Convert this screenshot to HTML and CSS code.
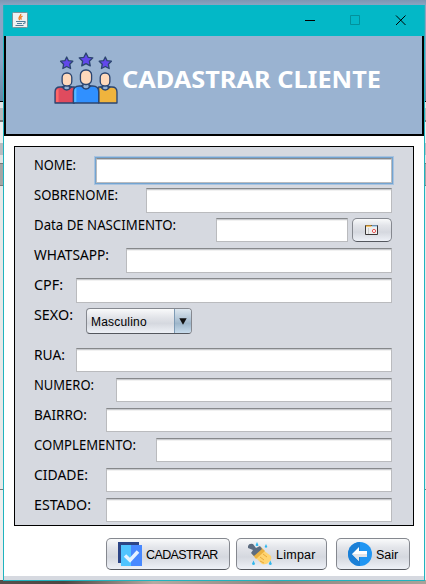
FILE: index.html
```html
<!DOCTYPE html>
<html lang="pt-BR">
<head>
<meta charset="utf-8">
<title>Cadastrar Cliente</title>
<link rel="stylesheet" href="styles.css">
</head>
<body>
<main class="window">
  <div class="titlebar">
    <svg class="java" width="16" height="16" viewBox="0 0 16 16"><rect x=".5" y=".5" width="15" height="15" rx="1" fill="#eef1f2" stroke="#7b9299"/><path d="M8.700 2c1 2-3.500 3-1 6M10.500 4c-2 1.200-2.500 2-1 3.500" fill="none" stroke="#ed7d22" stroke-width="1.300"/><path d="M4 9.500h7M5 11.500h5M3.500 13.500h8M11 9.500h2v1.500l-2 .8" fill="none" stroke="#4e7d99" stroke-width="1.100"/></svg>
    <svg class="controls" width="102" height="12" viewBox="0 0 102 12"><path d="M0 6.500h10" stroke="#000"/><path d="M45.500 1.500h9v9h-9z" fill="none" stroke="#02919b"/><path d="M91 1.500l9.500 9.500M100.500 1.500L91 11" stroke="#000" stroke-width="1"/></svg>
  </div>
  <header class="header">
    <svg class="people" width="64" height="54" viewBox="0 0 63 54" preserveAspectRatio="none" stroke="#2b4570" stroke-width="1.300" stroke-linejoin="round">
      <g fill="#6248ec">
        <path d="M12.500 5l1.800 3.700 4.200.5-3 3 .8 4.300-3.800-2-3.800 2 .8-4.300-3-3 4.200-.5z"/>
        <path d="M50.500 5l1.800 3.700 4.200.5-3 3 .8 4.300-3.800-2-3.800 2 .8-4.300-3-3 4.200-.5z"/>
        <path d="M31.500 1l2.100 4.300 4.600.6-3.400 3.300.9 4.700-4.200-2.300-4.200 2.300.9-4.700-3.400-3.300 4.600-.6z"/>
      </g>
      <path d="M1 51V40q0-5 5-5h14v16z" fill="#e04b5e"/><path d="M2 50V40q0-3 2.500-3v13z" fill="#ff6868" stroke="none"/>
      <path d="M44 51V35h13q5 0 5 5v11z" fill="#f0b43d"/>
      <path d="M10 32h5v3h2q-4.500 6-9 0h2zM48 32h5v3h2q-4.500 6-9 0h2z" fill="#93b2d6"/>
      <rect x="8" y="21" width="9.500" height="13" rx="4.500" fill="#ffd9bb"/><rect x="45.500" y="21" width="9.500" height="13" rx="4.500" fill="#ffd9bb"/>
      <path d="M19 51V40q0-6 6-6h13q6 0 6 6v11z" fill="#3090ff"/><path d="M20 50V40q0-4 2-4v14z" fill="#58bcff" stroke="none"/>
      <path d="M28.500 31h6v3h1.500q-4.500 6-9 0h1.500z" fill="#93b2d6"/><rect x="26" y="18" width="11" height="14.500" rx="5" fill="#ffd9bb"/>
    </svg>
    <svg class="title" width="270" height="40"><text x="0" y="25" textLength="259" lengthAdjust="spacingAndGlyphs">CADASTRAR CLIENTE</text></svg>
  </header>
  <section class="panel">
    <div class="row"><svg class="label"><text y="12" textLength="42" lengthAdjust="spacingAndGlyphs">NOME:</text></svg><i class="field w-nome focus"></i></div>
    <div class="row"><svg class="label"><text y="12" textLength="84" lengthAdjust="spacingAndGlyphs">SOBRENOME:</text></svg><i class="field tall w-sobrenome"></i></div>
    <div class="row"><svg class="label"><text y="12" textLength="142" lengthAdjust="spacingAndGlyphs">Data DE NASCIMENTO:</text></svg><i class="field w-data"></i>
      <button class="button date"><svg width="14" height="12" viewBox="0 0 14 12"><path d="M.5 1.500h12v9H.5z" fill="#eee" stroke="#3b3838"/><path d="M1 2h5.500" stroke="#f4aa28" stroke-width="1.300"/><path d="M7 2h5" stroke="#8fc3f0" stroke-width="1.300"/><path d="M3.500 4v6" stroke="#ccc"/><circle cx="9" cy="7" r="1.600" fill="#fff" stroke="#e65353"/></svg></button></div>
    <div class="row"><svg class="label"><text y="12" textLength="75" lengthAdjust="spacingAndGlyphs">WHATSAPP:</text></svg><i class="field tall w-whatsapp"></i></div>
    <div class="row"><svg class="label"><text y="12" textLength="29" lengthAdjust="spacingAndGlyphs">CPF:</text></svg><i class="field tall w-cpf"></i></div>
    <div class="row row-select"><svg class="label"><text y="12" textLength="39" lengthAdjust="spacingAndGlyphs">SEXO:</text></svg><div class="select"><span>Masculino</span><b><svg width="8" height="7"><path d="M.3.300h7.400L4 6.800z" fill="#111"/></svg></b></div></div>
    <div class="row"><svg class="label"><text y="12" textLength="31" lengthAdjust="spacingAndGlyphs">RUA:</text></svg><i class="field w-cpf"></i></div>
    <div class="row"><svg class="label"><text y="12" textLength="60" lengthAdjust="spacingAndGlyphs">NUMERO:</text></svg><i class="field w-numero"></i></div>
    <div class="row"><svg class="label"><text y="12" textLength="53" lengthAdjust="spacingAndGlyphs">BAIRRO:</text></svg><i class="field w-bairro"></i></div>
    <div class="row"><svg class="label"><text y="12" textLength="102" lengthAdjust="spacingAndGlyphs">COMPLEMENTO:</text></svg><i class="field w-complemento"></i></div>
    <div class="row"><svg class="label"><text y="12" textLength="54" lengthAdjust="spacingAndGlyphs">CIDADE:</text></svg><i class="field w-bairro"></i></div>
    <div class="row"><svg class="label"><text y="12" textLength="57" lengthAdjust="spacingAndGlyphs">ESTADO:</text></svg><i class="field w-bairro"></i></div>
  </section>
  <footer class="actions">
    <button class="button save"><svg width="24" height="24" viewBox="0 0 24 24"><path d="M0 0h21v21H0z" fill="#2c4586"/><path d="M3 3h11v21H3z" fill="#50c4ff"/><path d="M13 3h11v21H13z" fill="#4788ff"/><path d="M7 13.500l5 4.700 8-8.700" fill="none" stroke="#e6f3ff" stroke-width="3.500"/></svg><span>CADASTRAR</span></button>
    <button class="button clear"><svg width="24" height="24" viewBox="0 0 24 24"><path d="M6 14L15 8l8 6q1 4-2 6-2 3-7 2z" fill="#ffd470"/><path d="M4 12l9-7 4 4-9 8z" fill="#ebb240"/><path d="M0 4q1-3 5-2l3 4 4-2 2 3-8 7-3-3 2-3-5-2z" fill="#5d6c80"/><path d="M12 15l4 3m-1-6l4 3m-7 4l4 2" stroke="#e6a83c"/><path d="M9 0l1.500 3.200Q9 5 7.500 3.200zM5.500 18.500l1.600 3.500q-1.600 2-3.200 0zM22.300 18.500l1.600 3.500q-1.600 2-3.200 0zM18 2l1.400 3q-1.400 1.500-2.800 0z" fill="#31b7ed"/></svg><span>Limpar</span></button>
    <button class="button exit"><svg width="24" height="24" viewBox="0 0 24 24"><circle cx="12" cy="12" r="12" fill="#2196f3"/><path d="M12 0a12 12 0 0 0 0 24z" fill="#1b7fd6"/><path d="M4 12l7-7v4h8v6h-8v4z" fill="#fff"/><path d="M11 12h8v3h-8v4l-7-7z" fill="#e2e4e8"/></svg><span>Sair</span></button>
  </footer>
</main>
</body>
</html>
```
FILE: styles.css
```css
* { box-sizing: border-box; }
body {
  margin: 0;
  width: 426px;
  height: 584px;
  padding: 5px 1px 3px 3px;
  overflow: hidden;
  background:
    linear-gradient(#7e96b3, #8ba4c1) 0 0 / 426px 5px no-repeat,
    linear-gradient(90deg, #55504c, #4d4743 15%, #b4aaa1 36%, #8d8781 65%, #aaa299) 0 580px / 426px 4px no-repeat,
    linear-gradient(#8ba4c5 0 60px, #6688a5 101px, #000 101px 102px, #e4e4e4 102px 108px, #b5b8bb 108px 120px, #777 120px 122px, #eee 122px 143px, #b9bbc0 143px 155px, #e2e2e2 155px 163px, #777 163px 164px, #a5a5a5 164px 185px, #777 185px 186px, #e7e8e8 186px 489px, #777 489px 490px, #eee 490px);
}
.window {
  height: 576px;
  border: 1px solid #20b3bf;
  border-top: 0;
  background: linear-gradient(#d6d9e0, #d6d9e0) 0 571px / 100% 4px no-repeat, #fff;
}
.titlebar {
  height: 31px;
  padding: 7px 17px 0 8px;
  display: flex;
  justify-content: space-between;
  background: #03b8c7;
}
.controls { margin-top: 2px; }
.header {
  height: 100px;
  display: flex;
  padding: 16px 0 0 48px;
  background: #9ab3d1;
  border: solid #000;
  border-width: 0 2px 2px;
}
.title { margin: 11px 0 0 4px; overflow: visible; }
.title text { font: bold 24px "Noto Sans", sans-serif; fill: #fff; }
.panel {
  width: 400px;
  height: 380px;
  margin: 10px 0 0 10px;
  padding: 11px 21px 0 19px;
  border: 1px solid #000;
  background: #d6d9e0;
}
.row { height: 30px; display: flex; align-items: flex-start; }
.row-select { height: 40px; }
.label { flex: 1; min-width: 0; height: 18px; overflow: visible; }
.label text { font: 14px "Noto Sans", sans-serif; fill: #000; }
.field {
  flex: none;
  height: 24px;
  background: #fff;
  border: 1px solid #babbbe;
  border-top-color: #86888b;
  box-shadow: inset 0 1px #c9cbcf, inset 0 2px #f1f1f1;
}
.tall { height: 25px; }
.w-nome { width: 296px; }
.w-sobrenome { width: 246px; }
.w-data { width: 132px; }
.w-whatsapp { width: 266px; }
.w-cpf { width: 316px; }
.w-numero { width: 276px; }
.w-bairro { width: 286px; }
.w-complemento { width: 236px; }
.focus {
  height: 25px;
  box-shadow: 0 0 0 1px #73a4d1, 0 0 0 2px #a9c3df, inset 0 1px #c9cbcf;
}
.button {
  display: flex;
  align-items: center;
  flex: none;
  height: 32px;
  margin: 0;
  border: 1px solid #85888f;
  border-bottom-color: #54575e;
  border-radius: 5px;
  background: linear-gradient(#f9fafb, #e2e4e9 30%, #d5d8df 60%, #eef1f7);
  color: #000;
  font: 12.500px "Liberation Sans", Arial, sans-serif;
}
.button span { white-space: nowrap; padding-top: 2px; }
.date { width: 40px; height: 24px; margin-left: 4px; padding: 0; justify-content: center; }
.select {
  width: 106px;
  height: 26px;
  margin-right: 200px;
  display: flex;
  align-items: center;
  border: 1px solid #85888f;
  border-bottom-color: #54575e;
  border-radius: 4px;
  overflow: hidden;
  background: linear-gradient(#f9fafb, #e2e4e9 35%, #d5d8df 60%, #eef1f7);
  font: 12px "Liberation Sans", Arial, sans-serif;
  letter-spacing: .2px;
}
.select span { flex: 1; padding: 2px 0 0 4px; }
.select b {
  width: 17px;
  height: 100%;
  display: grid;
  place-items: center;
  border-left: 1px solid #7e9bb5;
  background: linear-gradient(#dde7ef, #afc3d5 45%, #9eb6ca 60%, #c8dced);
}
.actions { display: flex; margin: 12px 0 0 102px; gap: 6px; }
.save { width: 124px; padding: 0 0 0 11px; gap: 4px; }
.save span { letter-spacing: -.6px; }
.clear { width: 91px; padding: 0 0 0 11px; gap: 4px; }
.clear span { letter-spacing: .25px; }
.exit { width: 74px; margin-left: 3px; padding: 0 0 0 11px; gap: 4px; }
```
